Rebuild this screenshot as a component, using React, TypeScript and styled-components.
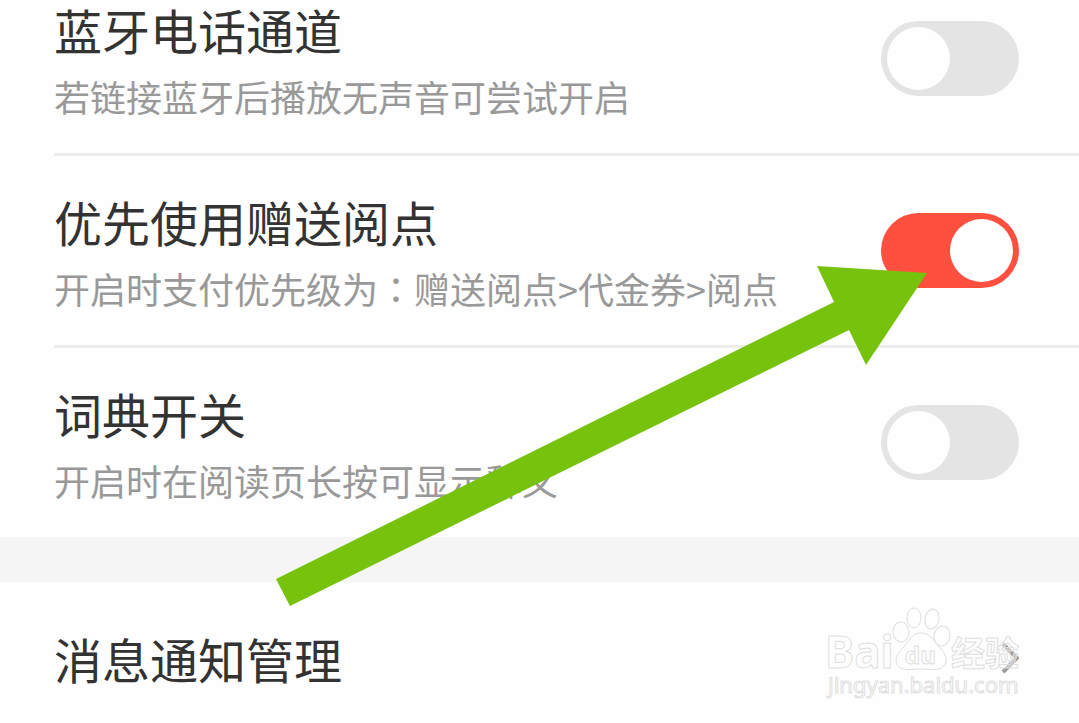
import React, { useState } from "react";
import styled, { createGlobalStyle } from "styled-components";

const GlobalStyle = createGlobalStyle`
  *, *::before, *::after { box-sizing: border-box; }
  body {
    margin: 0;
    background: #fefefe;
    font-family: "Noto Sans CJK SC", sans-serif;
    overflow: hidden;
  }
`;

const Page = styled.main`
  position: relative;
  display: flow-root;
  min-height: 100vh;
  overflow: hidden;
`;

const SettingsGroup = styled.section<{ $scrolled?: boolean }>`
  margin-top: ${(p) => (p.$scrolled ? "-36px" : "0")};
  padding-left: 54px;
`;

const Row = styled.div`
  display: flex;
  align-items: center;
  justify-content: space-between;
  min-height: 189px;
  padding-right: 60px;

  & + & {
    box-sizing: content-box;
    border-top: 3px solid #ededed;
  }
`;

const RowText = styled.label`
  display: flex;
  flex-direction: column;
  padding-top: 10px;
`;

const Title = styled.span`
  font-size: 48px;
  line-height: 64px;
  color: #333;
`;

const Description = styled.span`
  font-size: 36px;
  line-height: 70px;
  color: #999;
`;

const CenteredColon = styled.span`
  font-family: "Noto Sans CJK TC", sans-serif;
`;

const Switch = styled.input`
  appearance: none;
  flex: none;
  display: flex;
  align-items: center;
  width: 138px;
  height: 75px;
  margin: 0;
  padding: 0 6px;
  border-radius: 38px;
  background: #e4e4e4;
  cursor: pointer;

  &::before {
    content: "";
    width: 63px;
    height: 63px;
    border-radius: 50%;
    background: #fefefe;
  }

  &:checked {
    justify-content: flex-end;
    background: #ff503f;
  }
`;

const GroupGap = styled.div`
  height: 45px;
  background: #f5f5f5;
`;

const LinkRow = styled.a`
  display: flex;
  align-items: center;
  justify-content: space-between;
  height: 152px;
  padding-right: 60px;
  color: inherit;
  text-decoration: none;
`;

const Chevron = styled.svg`
  width: 18px;
  height: 32px;
`;

const Arrow = styled.svg`
  position: absolute;
  left: 276px;
  top: 265px;
  width: 652px;
  height: 342px;
  pointer-events: none;
`;

const Watermark = styled.svg`
  position: absolute;
  right: 49px;
  top: 600px;
  width: 210px;
  height: 110px;
  pointer-events: none;
`;

interface ToggleProps {
  id: string;
  title: string;
  initial?: boolean;
  children: React.ReactNode;
}

function ToggleRow({ id, title, initial = false, children }: ToggleProps) {
  const [on, setOn] = useState(initial);
  return (
    <Row>
      <RowText htmlFor={id}>
        <Title>{title}</Title>
        <Description>{children}</Description>
      </RowText>
      <Switch id={id} type="checkbox" role="switch" checked={on} onChange={() => setOn(!on)} />
    </Row>
  );
}

export default function App() {
  return (
    <Page lang="zh-CN">
      <GlobalStyle />
      <SettingsGroup $scrolled>
        <ToggleRow id="bluetooth" title="蓝牙电话通道">
          若链接蓝牙后播放无声音可尝试开启
        </ToggleRow>
        <ToggleRow id="gifted" title="优先使用赠送阅点" initial>
          开启时支付优先级为<CenteredColon lang="zh-TW">{"\uFF1A"}</CenteredColon>赠送阅点&gt;代金券&gt;阅点
        </ToggleRow>
        <ToggleRow id="dictionary" title="词典开关">
          开启时在阅读页长按可显示释义
        </ToggleRow>
      </SettingsGroup>
      <GroupGap />
      <SettingsGroup>
        <LinkRow href="#notifications">
          <Title>消息通知管理</Title>
          <Chevron viewBox="0 0 18 32" fill="none" stroke="#9a9a9a" strokeWidth="4" aria-hidden="true">
            <path d="M2 2 L16 16 L2 30" />
          </Chevron>
        </LinkRow>
      </SettingsGroup>

      <Arrow viewBox="276 265 652 342" aria-hidden="true">
        <path d="M276 579 L834 302 L817 266 L927 273 L866 365 L849 330 L290 606 Z" fill="#76c20d" />
      </Arrow>

      <Watermark viewBox="820 600 210 110" aria-hidden="true">
        <g fill="#fefefe" fillOpacity="0.45" stroke="#dedede" strokeWidth="1">
          <text x="825" y="668" fontFamily="Noto Sans" fontWeight="700" fontSize="44">Bai</text>
          <ellipse cx="901" cy="632" rx="8" ry="10" transform="rotate(-5 901 632)" />
          <ellipse cx="914" cy="618" rx="7" ry="10" />
          <ellipse cx="932" cy="619" rx="7" ry="10" transform="rotate(12 932 619)" />
          <ellipse cx="942" cy="636" rx="8" ry="10" transform="rotate(10 942 636)" />
          <path d="M921 633 C931 633 934 642 940 648 C946 654 949 661 943 667 C938 671 930 669 921 669 C912 669 904 671 899 667 C893 661 897 654 903 648 C909 642 911 633 921 633 Z" />
          <text x="905" y="664" fontFamily="Noto Sans" fontWeight="700" fontSize="24">du</text>
          <text x="951" y="666" fontFamily="Noto Sans CJK SC" fontWeight="700" fontSize="34">经验</text>
          <text x="828" y="693" fontFamily="Noto Sans" fontSize="22">jingyan.baidu.com</text>
        </g>
      </Watermark>
    </Page>
  );
}
